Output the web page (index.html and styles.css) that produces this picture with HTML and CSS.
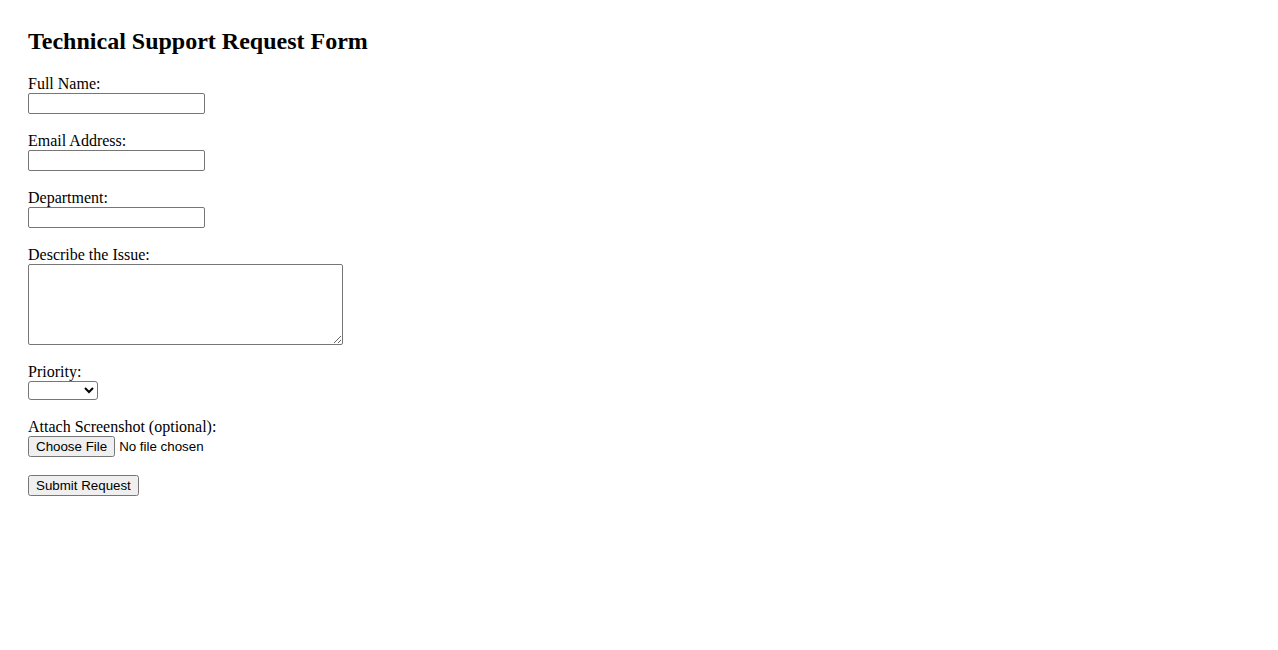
FILE: index.html
```html
<!DOCTYPE html>
<html lang="en">
<head>
<meta charset="utf-8">
<title>Technical Support Request Form</title>
<link rel="stylesheet" href="styles.css">
</head>
<body>
<div class="page">
  <h2 class="title">Technical Support Request Form</h2>
  <form class="form">
    <label for="name">Full Name:</label><br>
    <input class="field" type="text" id="name" name="name"><br><br>

    <label for="email">Email Address:</label><br>
    <input class="field" type="email" id="email" name="email"><br><br>

    <label for="dept">Department:</label><br>
    <input class="field" type="text" id="dept" name="dept"><br><br>

    <label for="issue">Describe the Issue:</label><br>
    <textarea class="area" id="issue" name="issue"></textarea><br><br>

    <label for="priority">Priority:</label><br>
    <select class="pick" id="priority" name="priority"></select><br><br>

    <label for="shot">Attach Screenshot (optional):</label><br>
    <input class="file" type="file" id="shot" name="shot"><br><br>

    <input class="submit" type="submit" value="Submit Request">
  </form>
</div>
</body>
</html>
```

FILE: styles.css
```css
html, body {
  background: #ffffff;
}
body {
  margin: 8px;
  font-family: "Liberation Serif", "Times New Roman", serif;
  font-size: 16px;
  color: #000000;
}
.page {
  padding: 20px;
}
.title {
  margin: 0 0 19.92px 0;
  font-size: 24px;
  font-weight: bold;
}
.form {
  margin: 0;
}
.field {
  box-sizing: border-box;
  width: 177px;
  height: 21px;
  font-family: "Liberation Sans", Arial, sans-serif;
  font-size: 13.33px;
  border: 1px solid #767676;
  border-radius: 2px;
  padding: 1px 2px;
  margin: 0;
}
.area {
  box-sizing: border-box;
  width: 315px;
  height: 81px;
  font-family: "Liberation Mono", monospace;
  font-size: 13.33px;
  border: 1px solid #767676;
  border-radius: 2px;
  padding: 2px;
  margin: 0;
  vertical-align: bottom;
}
.pick {
  box-sizing: border-box;
  width: 70px;
  height: 19px;
  font-family: "Liberation Sans", Arial, sans-serif;
  font-size: 13.33px;
  background-color: #ffffff;
  color: #000000;
  border: 1px solid #767676;
  border-radius: 3px;
  margin: 0;
}
.file {
  font-family: "Liberation Sans", Arial, sans-serif;
  font-size: 13.33px;
  margin: 0;
}
.submit {
  font-family: "Liberation Sans", Arial, sans-serif;
  font-size: 13.33px;
  margin: 0;
}
```
